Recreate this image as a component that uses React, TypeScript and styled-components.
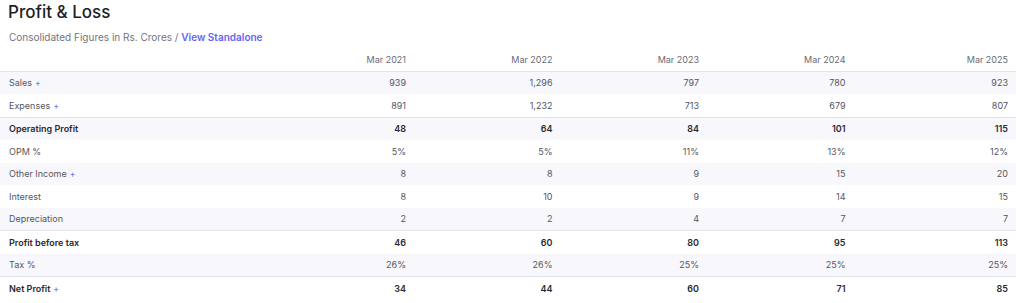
import React from 'react';
import styled, { createGlobalStyle } from 'styled-components';

const GlobalStyle = createGlobalStyle`
  html, body {
    margin: 0;
    padding: 0;
    background: #ffffff;
  }
  body {
    font-family: Inter, "Noto Sans", "Liberation Sans", sans-serif;
    color: #222;
  }
`;

const Section = styled.section`
  width: 1016px;
  padding-top: 1px;
`;

const Title = styled.h2`
  margin: 0;
  padding-left: 8px;
  font-size: 17px;
  line-height: 22px;
  font-weight: 500;
  color: #1e1e24;
`;

const Subtitle = styled.p`
  margin: 7px 0 0;
  padding-left: 9px;
  font-size: 10px;
  line-height: 14px;
  color: #74747f;
`;

const Link = styled.a`
  color: #6366f1;
  font-weight: 600;
  text-decoration: none;
`;

const Table = styled.div`
  margin-top: 4px;
  font-size: 9px;
`;

const Row = styled.div<{ $striped?: boolean; $strong?: boolean; $head?: boolean }>`
  display: grid;
  grid-template-columns: 267.5px repeat(4, 146.5px) 1fr;
  height: 22.5px;
  align-items: center;
  background: ${p => (p.$striped ? '#f8f8fc' : '#ffffff')};
  border-top: ${p => (p.$strong ? '1px solid #e2e5f0' : 'none')};
  border-bottom: ${p => (p.$head ? '1px solid #e2e5f0' : 'none')};
  font-weight: ${p => (p.$strong ? 600 : 400)};
  color: ${p => (p.$head ? '#6a6a72' : p.$strong ? '#2a2a33' : '#55555f')};
`;

const Label = styled.div`
  padding-left: 9px;
  white-space: nowrap;
`;

const Cell = styled.div`
  text-align: right;
  padding-right: 8px;
`;

const Plus = styled.span`
  color: #7b74f0;
  font-weight: 500;
  margin-left: 3px;
  font-size: 8.5px;
`;

const years = ['Mar 2021', 'Mar 2022', 'Mar 2023', 'Mar 2024', 'Mar 2025'];

const rows: { label: string; values: string[]; strong?: boolean; expand?: boolean }[] = [
  { label: 'Sales', values: ['939', '1,296', '797', '780', '923'], expand: true },
  { label: 'Expenses', values: ['891', '1,232', '713', '679', '807'], expand: true },
  { label: 'Operating Profit', values: ['48', '64', '84', '101', '115'], strong: true },
  { label: 'OPM %', values: ['5%', '5%', '11%', '13%', '12%'] },
  { label: 'Other Income', values: ['8', '8', '9', '15', '20'], expand: true },
  { label: 'Interest', values: ['8', '10', '9', '14', '15'] },
  { label: 'Depreciation', values: ['2', '2', '4', '7', '7'] },
  { label: 'Profit before tax', values: ['46', '60', '80', '95', '113'], strong: true },
  { label: 'Tax %', values: ['26%', '26%', '25%', '25%', '25%'] },
  { label: 'Net Profit', values: ['34', '44', '60', '71', '85'], strong: true, expand: true },
];

export default function App() {
  return (
    <>
      <GlobalStyle />
      <Section>
        <Title>Profit &amp; Loss</Title>
        <Subtitle>
          Consolidated Figures in Rs. Crores / <Link href="#">View Standalone</Link>
        </Subtitle>
        <Table>
          <Row $head>
            <Label />
            {years.map(y => (
              <Cell key={y}>{y}</Cell>
            ))}
          </Row>
          {rows.map((r, i) => (
            <Row key={r.label} $striped={i % 2 === 0} $strong={r.strong}>
              <Label>
                {r.label}
                {r.expand && <Plus>+</Plus>}
              </Label>
              {r.values.map((v, j) => (
                <Cell key={j}>{v}</Cell>
              ))}
            </Row>
          ))}
        </Table>
      </Section>
    </>
  );
}
